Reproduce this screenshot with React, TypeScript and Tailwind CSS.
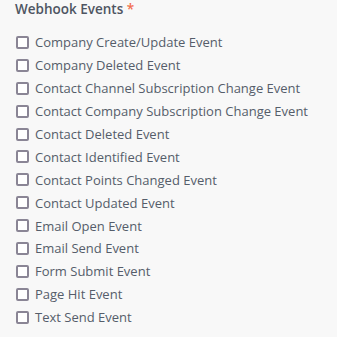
const events = [
  'Company Create/Update Event',
  'Company Deleted Event',
  'Contact Channel Subscription Change Event',
  'Contact Company Subscription Change Event',
  'Contact Deleted Event',
  'Contact Identified Event',
  'Contact Points Changed Event',
  'Contact Updated Event',
  'Email Open Event',
  'Email Send Event',
  'Form Submit Event',
  'Page Hit Event',
  'Text Send Event',
];

export default function App() {
  return (
    <div className="h-[337px] w-[337px] bg-[#f8f8f8] pl-[15px] font-['Open_Sans',sans-serif]">
      <div className="text-[13.5px] font-semibold leading-[18px] text-[#4e5562]">
        Webhook Events <span className="text-[#f26f4f]">*</span>
      </div>
      <div className="mt-[13px] flex flex-col">
        {events.map((e) => (
          <label key={e} className="flex h-[22.9px] items-center gap-[6px] pl-[1px]">
            <span className="h-[13px] w-[13px] shrink-0 rounded-[2px] border-2 border-[#8a8595] bg-white" />
            <span className="text-[13px] leading-[18px] text-[#555d6a]">{e}</span>
          </label>
        ))}
      </div>
    </div>
  );
}
